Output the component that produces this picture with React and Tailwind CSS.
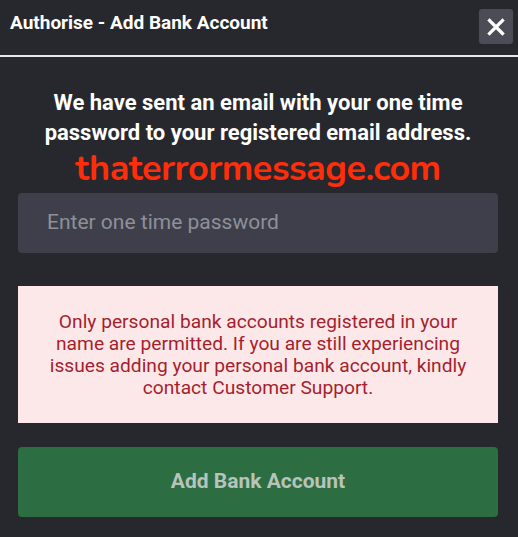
import React from 'react';

export default function App() {
    return (
        <div className="w-[518px] h-[537px] bg-[#27282d] overflow-hidden" style={{ fontFamily: 'Roboto, "Liberation Sans", sans-serif' }}>
            <div className="flex items-start justify-between h-[55px] pl-[10px] pr-[5px] pt-[9px]">
                <h1 className="mt-[1px] text-[19px] leading-[26px] font-bold text-white">Authorise - Add Bank Account</h1>
                <button className="w-[34px] h-[35px] rounded-[3px] bg-[#4b4c55] flex items-center justify-center">
                    <svg width="20" height="20" viewBox="0 0 20 20">
                        <path d="M3.5 3.5L16.5 16.5M16.5 3.5L3.5 16.5" stroke="white" strokeWidth="3.2" strokeLinecap="square" />
                    </svg>
                </button>
            </div>
            <div className="h-[2px] bg-[#e8e8ea]" />

            <div className="pl-[18px] pr-[20px]">
                <p className="mt-[31px] text-center text-[22px] leading-[30px] font-bold text-white">
                    We have sent an email with your one time<br />password to your registered email address.
                </p>
                <p className="text-center text-[36px] leading-[42px] font-bold text-[#ff2d0a] tracking-[-0.5px]" style={{ fontFamily: '"Nunito", "DejaVu Sans", sans-serif' }}>
                    thaterrormessage.com
                </p>
                <div className="mt-[3px] h-[60px] rounded-[4px] bg-[#3e3f4a] flex items-center px-[29px]">
                    <span className="text-[21px] text-[#8e9099]">Enter one time password</span>
                </div>

                <div className="mt-[33px] h-[137px] bg-[#fde8e9] flex items-center justify-center px-[20px]">
                    <p className="text-center text-[19.2px] leading-[22px] text-[#a41f2e]">
                        Only personal bank accounts registered in your name are permitted. If you are still experiencing issues adding your personal bank account, kindly contact Customer Support.
                    </p>
                </div>

                <button className="mt-[24px] w-full h-[70px] rounded-[4px] bg-[#2c6d42] flex items-center justify-center">
                    <span className="text-[21px] font-bold text-[#b7c3bb]">Add Bank Account</span>
                </button>
            </div>
        </div>
    );
}
